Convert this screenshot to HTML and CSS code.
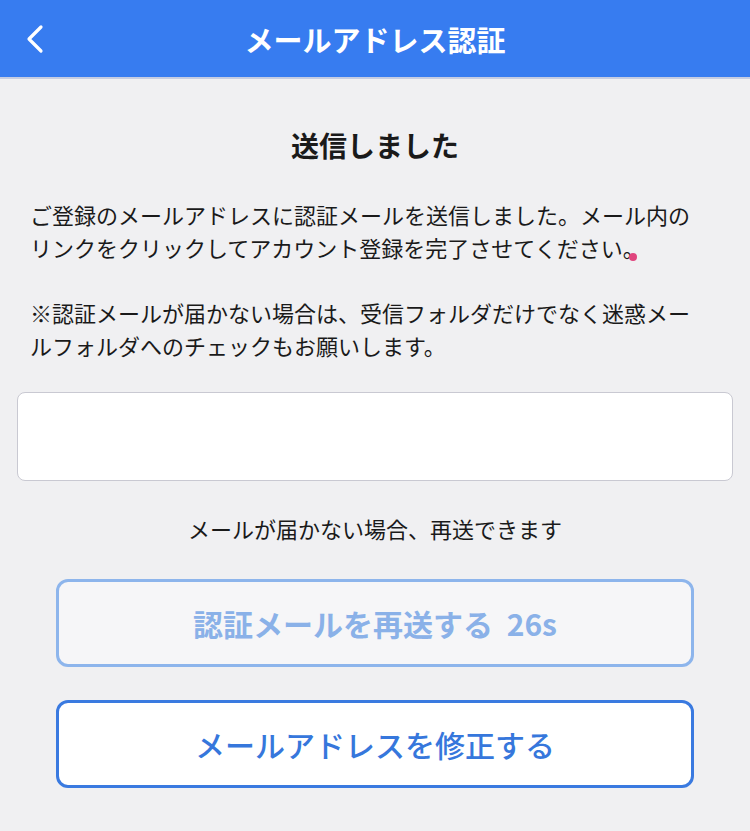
FILE: index.html
```html
<!DOCTYPE html>
<html lang="ja">
<head>
    <meta charset="UTF-8">
    <meta name="viewport" content="width=device-width, initial-scale=1.0">
    <title>メールアドレス認証</title>
    <link rel="stylesheet" href="styles.css">
</head>
<body>
    <header class="app-bar">
        <a href="#" class="back-link" aria-label="戻る">
            <svg width="22" height="30" viewBox="0 0 22 30">
                <path d="M17 3 L5 15 L17 27" fill="none" stroke="#ffffff" stroke-width="3.2" stroke-linecap="round" stroke-linejoin="round"/>
            </svg>
        </a>
        <h1>メールアドレス認証</h1>
    </header>

    <main class="content">
        <h2 class="title">送信しました</h2>

        <p class="message">ご登録のメールアドレスに認証メールを送信しました。メール内のリンクをクリックしてアカウント登録を完了させてください。<span class="touch-mark"></span></p>
        <p class="message">※認証メールが届かない場合は、受信フォルダだけでなく迷惑メールフォルダへのチェックもお願いします。</p>

        <div class="mail-box"></div>

        <p class="resend-note">メールが届かない場合、再送できます</p>

        <div class="actions">
            <button type="button" class="button button-disabled" disabled>認証メールを再送する&nbsp;&nbsp;26s</button>
            <button type="button" class="button button-outline">メールアドレスを修正する</button>
        </div>
    </main>
</body>
</html>
```

FILE: styles.css
```css
body {
    font-family: "Noto Sans CJK JP", "Noto Sans", sans-serif;
    background-color: #f0f0f2;
    color: #1a1a1a;
    margin: 0;
    padding: 0;
}
.app-bar {
    position: relative;
    height: 77px;
    background: #377cf0;
    border-bottom: 2px solid #c6cde2;
    display: flex;
    align-items: center;
    justify-content: center;
}
.app-bar h1 {
    margin: 0;
    color: #ffffff;
    font-size: 29px;
    font-weight: 700;
    line-height: 40px;
}
.back-link {
    position: absolute;
    left: 24px;
    top: 24px;
    display: block;
    line-height: 0;
}
.content {
    padding: 0 17px 40px;
}
.title {
    margin: 46px 0 0;
    text-align: center;
    font-size: 28px;
    font-weight: 700;
    line-height: 40px;
}
.message {
    position: relative;
    margin: 33px 0 0;
    padding: 0 24px 0 13px;
    font-size: 22px;
    line-height: 33px;
}
.message + .message {
    margin-top: 32px;
}
/* tap indicator left on the screen */
.touch-mark {
    position: absolute;
    left: 612px;
    top: 55px;
    width: 8px;
    height: 8px;
    border-radius: 50%;
    background: #e0457e;
}
.mail-box {
    margin-top: 30px;
    height: 87px;
    background: #ffffff;
    border: 1.5px solid #c9c9d2;
    border-radius: 8px;
}
.resend-note {
    margin: 31px 0 0;
    text-align: center;
    font-size: 22px;
    line-height: 33px;
}
.actions {
    margin: 34px 39px 0;
    display: flex;
    flex-direction: column;
    gap: 33px;
}
.button {
    height: 88px;
    border-radius: 12px;
    font-family: inherit;
    font-size: 30px;
    line-height: 40px;
    padding: 0;
    box-sizing: border-box;
}
.button-disabled {
    background: #f6f6f8;
    border: 3px solid #8db5ec;
    color: #8ab1e8;
    font-weight: 700;
}
.button-outline {
    background: #ffffff;
    border: 3px solid #3a7ae0;
    color: #3677dc;
    font-weight: 500;
}
```
